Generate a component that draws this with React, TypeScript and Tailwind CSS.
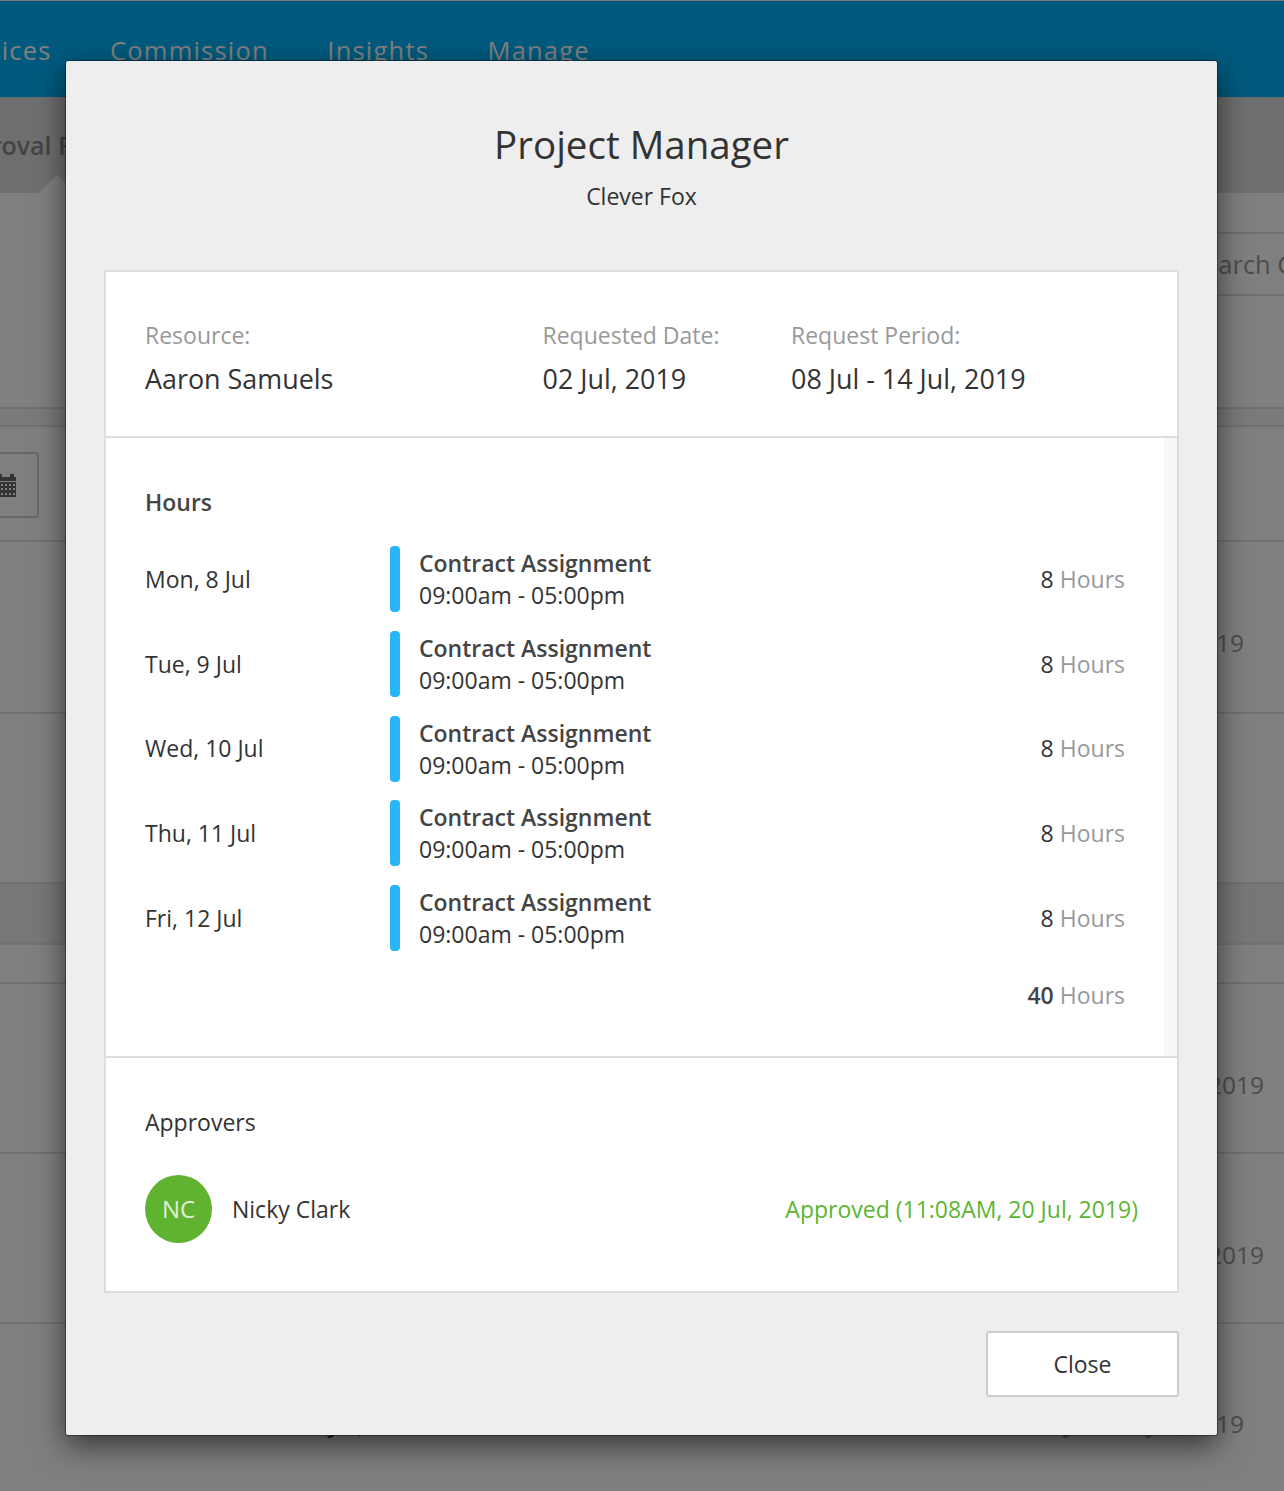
const font = { fontFamily: '"Open Sans", sans-serif' };

const days = ["Mon, 8 Jul", "Tue, 9 Jul", "Wed, 10 Jul", "Thu, 11 Jul", "Fri, 12 Jul"];

function Row({ h, text, cls = "" }: { h: string; text?: string; cls?: string }) {
  return (
    <div className={`flex justify-end border-b-2 border-[#e2e2e2] pr-[40px] text-[24.5px] leading-[36px] text-[#999] ${h} ${cls}`}>
      {text}
    </div>
  );
}

function Background() {
  return (
    <div className="h-[1491px] overflow-hidden bg-white">
      <div className="h-[97px] border-t border-[#f0f0f0] bg-[#00b5fa]">
        <div className="ml-[-54px] flex gap-[58.5px] whitespace-nowrap pt-[31.5px] text-[25.5px] leading-[34px] tracking-[1.2px] text-white">
          <span>Invoices</span>
          <span>Commission</span>
          <span>Insights</span>
          <span>Manage</span>
        </div>
      </div>
      <div className="relative h-[96px] bg-[#dedede]">
        <div className="ml-[-57px] whitespace-nowrap pt-[31px] text-[25px] font-semibold leading-[34px] text-[#888]">Approval Requests</div>
        <div className="absolute bottom-[-13px] left-[44px] size-[26px] rotate-45 bg-white" />
      </div>
      <div className="h-[214px] pt-[39px]">
        <div className="ml-[1180px] h-[64px] w-[300px] whitespace-nowrap border-y-2 border-[#ddd] pl-[10px] text-[25.5px] leading-[60px] text-[#999]">
          Search Clients
        </div>
      </div>
      <div className="h-[20px] border-y-2 border-[#e0e0e0] bg-[#f4f4f4]" />
      <div className="h-[115px] border-b-2 border-[#e2e2e2] pt-[25px]">
        <div className="ml-[-40px] flex h-[66px] w-[79px] items-center justify-end rounded-[4px] border-2 border-[#ccc] pr-[21px]">
          <svg width="24" height="23" viewBox="0 0 24 23" fill="#666">
            <rect x="6" y="0" width="4" height="4" />
            <rect x="18" y="0" width="4" height="4" />
            <rect x="0" y="3" width="24" height="4" />
            <path fillRule="evenodd" d="M0 8h24v15H0zM1 10v2h2v-2zM5 10v2h2v-2zM9 10v2h2v-2zM13 10v2h2v-2zM17 10v2h2v-2zM21 10v2h2v-2zM1 14v2h2v-2zM5 14v2h2v-2zM9 14v2h2v-2zM13 14v2h2v-2zM17 14v2h2v-2zM21 14v2h2v-2zM1 19v2h2v-2zM5 19v2h2v-2zM9 19v2h2v-2zM13 19v2h2v-2zM17 19v2h2v-2zM21 19v2h2v-2z" />
          </svg>
        </div>
      </div>
      <Row h="h-[172px]" text="01 Jul, 2019" cls="pt-[83px]" />
      <Row h="h-[170px]" />
      <Row h="h-[61px]" cls="bg-[#eeeeee]" />
      <Row h="h-[39px]" />
      <Row h="h-[170px]" text="10 Jul, 2019" cls="!pr-[20px] pt-[83px]" />
      <Row h="h-[170px]" text="10 Jul, 2019" cls="!pr-[20px] pt-[83px]" />
      <div className="flex h-[168px] items-start whitespace-nowrap pl-[295px] pr-[40px] pt-[82px] text-[24.5px] leading-[36px] text-[#333]">
        <span className="flex-1">02 Jul, 2019</span>
        <span className="text-[#999]">08 Jul - 14 Jul, 2019</span>
      </div>
    </div>
  );
}

export default function App() {
  return (
    <div className="relative h-[1491px] w-[1284px] overflow-hidden" style={font}>
      <Background />
      <div className="absolute inset-0 bg-black/50" />
      <div className="absolute left-[66px] top-[61px] flex h-[1374px] w-[1151px] flex-col rounded-[2px] bg-[#eeeeee] px-[38px] text-[#333] shadow-[0_0_0_1px_rgba(0,0,0,0.35),0_10px_30px_rgba(0,0,0,0.6)]">
        <h1 className="mt-[53px] text-center text-[38.5px] leading-[60px]">Project Manager</h1>
        <p className="mt-[6px] text-center text-[23px] leading-[32px]">Clever Fox</p>

        <div className="mt-[58px] border-2 border-[#dddddd] bg-white">
          <div className="flex h-[164px] pl-[39px] pt-[47px]">
            <div className="w-[397.5px]">
              <div className="text-[23px] leading-[32px] text-[#999]">Resource:</div>
              <div className="mt-[10px] text-[26.9px] leading-[36px]">Aaron Samuels</div>
            </div>
            <div className="w-[248.5px]">
              <div className="text-[23px] leading-[32px] text-[#999]">Requested Date:</div>
              <div className="mt-[10px] text-[26.9px] leading-[36px]">02 Jul, 2019</div>
            </div>
            <div>
              <div className="text-[23px] leading-[32px] text-[#999]">Request Period:</div>
              <div className="mt-[10px] text-[26.9px] leading-[36px]">08 Jul - 14 Jul, 2019</div>
            </div>
          </div>

          <div className="flex h-[622px] border-y-2 border-[#dddddd]">
            <div className="flex-1 pl-[39px] pr-[39px] pt-[46px]">
              <div className="text-[23px] font-semibold leading-[36px] text-[#444]">Hours</div>
              <div className="mt-[26px] flex flex-col gap-[18.75px]">
                {days.map((d) => (
                  <div key={d} className="flex h-[66px] items-center">
                    <div className="w-[245px] text-[23px]">{d}</div>
                    <div className="h-full w-[10px] rounded-[4px] bg-[#29b6f6]" />
                    <div className="ml-[19px] flex-1">
                      <div className="text-[23px] font-semibold leading-[32px] text-[#444]">Contract Assignment</div>
                      <div className="text-[23px] leading-[32px]">09:00am - 05:00pm</div>
                    </div>
                    <div className="text-[23px]">
                      8 <span className="text-[#999]">Hours</span>
                    </div>
                  </div>
                ))}
              </div>
              <div className="mt-[28px] text-right text-[23px] leading-[32px]">
                <span className="font-semibold text-[#444]">40</span> <span className="text-[#999]">Hours</span>
              </div>
            </div>
            <div className="w-[13px] bg-[#f8f8f8]" />
          </div>

          <div className="h-[233px] pl-[39px] pr-[39px] pt-[48px]">
            <div className="text-[23px] leading-[32px]">Approvers</div>
            <div className="mt-[37px] flex items-center">
              <div className="flex h-[68px] w-[67px] items-center justify-center rounded-[50%] bg-[#60b330] text-[24px] text-white/80">NC</div>
              <div className="ml-[20px] flex-1 text-[23px]">Nicky Clark</div>
              <div className="text-[23px] text-[#5cb531]">Approved (11:08AM, 20 Jul, 2019)</div>
            </div>
          </div>
        </div>

        <div className="mt-[38px] flex justify-end">
          <button className="h-[66px] w-[193px] rounded-[3px] border-2 border-[#cccccc] bg-white text-[23px]">Close</button>
        </div>
      </div>
    </div>
  );
}
